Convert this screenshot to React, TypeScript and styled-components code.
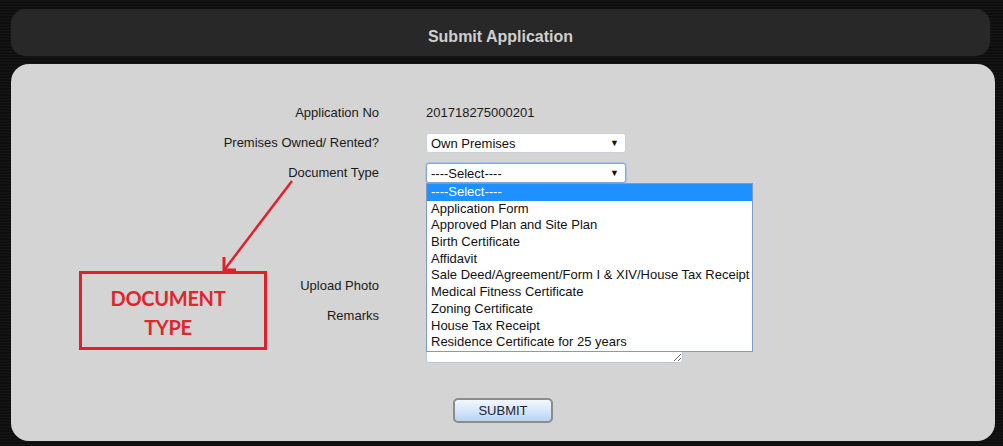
import styled, { createGlobalStyle } from "styled-components"

const GlobalStyle = createGlobalStyle`
  html, body {
    margin: 0;
    padding: 0;
    background: #0e0e0e;
  }
`

const Page = styled.div`
  width: 1003px;
  height: 446px;
  box-sizing: border-box;
  padding: 9px 8px 5px 11px;
  background:
    repeating-linear-gradient(180deg, rgba(255,255,255,0.03) 0 1px, rgba(0,0,0,0) 1px 3px),
    #0e0e0e;
  font-family: "Liberation Sans", Arial, sans-serif;
  display: flex;
  flex-direction: column;
  gap: 8px;
  overflow: hidden;
`

const Header = styled.div`
  height: 47px;
  margin-right: 5px;
  border-radius: 15px;
  background: #282828;
  box-shadow: 0 0 2px rgba(255,255,255,0.08);
  display: flex;
  align-items: center;
  justify-content: center;
  padding-top: 8px;
  box-sizing: border-box;
  color: #cfcfcf;
  font-size: 16px;
  font-weight: bold;
`

const Panel = styled.div`
  position: relative;
  flex: 1;
  background: #d4d4d4;
  border-radius: 18px;
  padding-top: 34px;
  box-sizing: border-box;
  font-size: 13px;
  color: #1a1a1a;
`

const Row = styled.div<{ $top?: boolean; $gap?: number }>`
  display: grid;
  grid-template-columns: 368px 1fr;
  column-gap: 47px;
  align-items: ${(p) => (p.$top ? "start" : "center")};
  min-height: 30px;
  margin-top: ${(p) => p.$gap ?? 0}px;
`

const Label = styled.div`
  text-align: right;
  line-height: 18px;
`

const Value = styled.div`
  line-height: 18px;
`

const SelectWrap = styled.div`
  position: relative;
  width: 200px;
`

const FakeSelect = styled.div<{ $focus?: boolean }>`
  height: 20px;
  box-sizing: border-box;
  background: #fff;
  border: 1px solid ${(p) => (p.$focus ? "#7ea6d6" : "#c9d3dd")};
  border-radius: 3px;
  box-shadow: ${(p) => (p.$focus ? "0 0 0 1px #a9c6ea" : "none")};
  display: flex;
  align-items: center;
  justify-content: space-between;
  padding: 0 6px 0 4px;
  font-size: 13px;
  color: #111;
`

const Arrow = styled.span`
  font-size: 9px;
  color: #111;
`

const DropList = styled.ul`
  position: absolute;
  top: 20px;
  left: 0;
  width: 327px;
  margin: 0;
  padding: 0;
  list-style: none;
  background: #fff;
  border: 1px solid #7d9bc4;
  box-sizing: border-box;
  z-index: 5;
`

const Option = styled.li<{ $active?: boolean }>`
  height: 16.7px;
  line-height: 16.7px;
  padding-left: 4px;
  font-size: 13px;
  white-space: nowrap;
  color: ${(p) => (p.$active ? "#fff" : "#111")};
  background: ${(p) => (p.$active ? "#1e90ff" : "transparent")};
`

const Remarks = styled.textarea`
  width: 257px;
  height: 56px;
  box-sizing: border-box;
  border: 1px solid #b6c6d8;
  border-radius: 3px;
  background: #fff;
  resize: both;
  display: block;
`

const ButtonRow = styled.div`
  display: flex;
  justify-content: center;
  margin-top: 35px;
`

const SubmitButton = styled.button`
  width: 100px;
  height: 25px;
  border: 2px solid #8c8c8c;
  border-radius: 5px;
  background: linear-gradient(180deg, #f2f7fd 0%, #d3e5fa 55%, #b9d3f2 100%);
  font-family: "Liberation Sans", Arial, sans-serif;
  font-size: 13px;
  color: #1b2233;
  padding: 0;
`

const Note = styled.div`
  position: absolute;
  left: 68px;
  top: 207px;
  width: 188px;
  height: 79px;
  box-sizing: border-box;
  border: 3px solid #e0202a;
  display: flex;
  align-items: center;
  justify-content: center;
  text-align: center;
  font-family: "Lato", "Open Sans", sans-serif;
  font-weight: bold;
  font-size: 20px;
  line-height: 29px;
  letter-spacing: -0.3px;
  color: #e0262d;
  padding: 4px 10px 0 0;
`

const NoteArrow = styled.svg`
  position: absolute;
  left: 200px;
  top: 110px;
  overflow: visible;
`

const options = [
  "----Select----",
  "Application Form",
  "Approved Plan and Site Plan",
  "Birth Certificate",
  "Affidavit",
  "Sale Deed/Agreement/Form I & XIV/House Tax Receipt",
  "Medical Fitness Certificate",
  "Zoning Certificate",
  "House Tax Receipt",
  "Residence Certificate for 25 years",
]

function App() {
  return (
    <>
      <GlobalStyle />
      <Page>
        <Header>Submit Application</Header>
        <Panel>
          <Row>
            <Label>Application No</Label>
            <Value>201718275000201</Value>
          </Row>
          <Row>
            <Label>Premises Owned/ Rented?</Label>
            <SelectWrap>
              <FakeSelect>
                Own Premises<Arrow>▼</Arrow>
              </FakeSelect>
            </SelectWrap>
          </Row>
          <Row>
            <Label>Document Type</Label>
            <SelectWrap>
              <FakeSelect $focus>
                ----Select----<Arrow>▼</Arrow>
              </FakeSelect>
              <DropList>
                {options.map((o, i) => (
                  <Option key={o} $active={i === 0}>
                    {o}
                  </Option>
                ))}
              </DropList>
            </SelectWrap>
          </Row>
          <Row $gap={83}>
            <Label>Upload Photo</Label>
            <Value />
          </Row>
          <Row $top $gap={6}>
            <Label>Remarks</Label>
            <Remarks />
          </Row>
          <ButtonRow>
            <SubmitButton>SUBMIT</SubmitButton>
          </ButtonRow>

          {/* annotation */}
          <NoteArrow width="100" height="100">
            <line x1="81" y1="7" x2="14" y2="95" stroke="#e0202a" strokeWidth="2.5" />
            <polyline points="13,83 13,96 25,96" fill="none" stroke="#e0202a" strokeWidth="3" />
          </NoteArrow>
          <Note>
            DOCUMENT
            <br />
            TYPE
          </Note>
        </Panel>
      </Page>
    </>
  )
}

export default App
